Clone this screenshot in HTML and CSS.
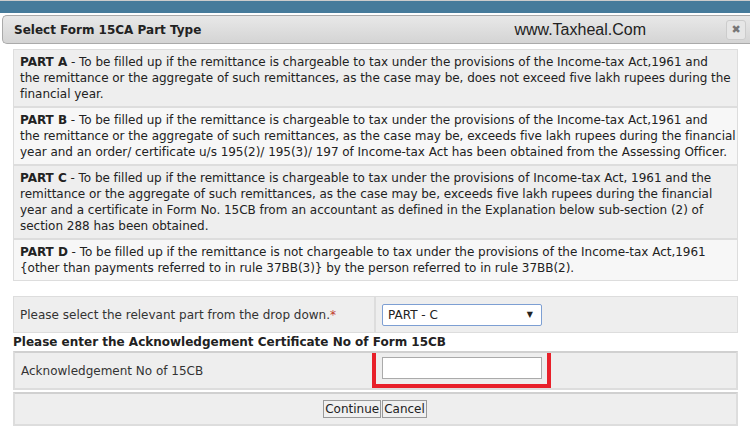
FILE: index.html
```html
<!DOCTYPE html>
<html lang="en">
<head>
    <meta charset="UTF-8">
    <title>Select Form 15CA Part Type</title>
    <link rel="stylesheet" href="styles.css">
</head>
<body>
    <div class="topbar"></div>
    <div class="dialog-head">
        <span class="dialog-title">Select Form 15CA Part Type</span>
        <span class="watermark">www.Taxheal.Com</span>
        <span class="close">&#10006;</span>
    </div>

    <div class="parts">
        <div class="part odd"><b>PART A</b> - To be filled up if the remittance is chargeable to tax under the provisions of the Income-tax Act,1961 and<br>the remittance or the aggregate of such remittances, as the case may be, does not exceed five lakh rupees during the<br>financial year.</div>
        <div class="part even"><b>PART B</b> - To be filled up if the remittance is chargeable to tax under the provisions of the Income-tax Act,1961 and<br>the remittance or the aggregate of such remittances, as the case may be, exceeds five lakh rupees during the financial<br>year and an order/ certificate u/s 195(2)/ 195(3)/ 197 of Income-tax Act has been obtained from the Assessing Officer.</div>
        <div class="part odd"><b>PART C</b> - To be filled up if the remittance is chargeable to tax under the provisions of Income-tax Act, 1961 and the<br>remittance or the aggregate of such remittances, as the case may be, exceeds five lakh rupees during the financial<br>year and a certificate in Form No. 15CB from an accountant as defined in the Explanation below sub-section (2) of<br>section 288 has been obtained.</div>
        <div class="part even"><b>PART D</b> - To be filled up if the remittance is not chargeable to tax under the provisions of the Income-tax Act,1961<br>{other than payments referred to in rule 37BB(3)} by the person referred to in rule 37BB(2).</div>
    </div>

    <div class="form-row">
        <div class="cell label">Please select the relevant part from the drop down.<span class="req">*</span></div>
        <div class="cell field">
            <div class="select">PART - C<span class="arrow">&#9660;</span></div>
        </div>
    </div>

    <h3 class="ack-head">Please enter the Acknowledgement Certificate No of Form 15CB</h3>

    <div class="form-row inset">
        <div class="cell label">Acknowledgement No of 15CB</div>
        <div class="cell field">
            <div class="highlight"><input type="text" class="ack-input"></div>
        </div>
    </div>

    <div class="form-row inset buttons">
        <button>Continue</button><button>Cancel</button>
    </div>
</body>
</html>
```

FILE: styles.css
```css
body { margin: 0; font-family: "DejaVu Sans", Verdana, sans-serif; font-size: 12px; color: #222; background: #fff; }
.topbar { height: 12px; background: #467b9b; border-top: 1px solid #ccc; }
.dialog-head { display: flex; align-items: center; height: 27px; margin: 2px 0 0 2px; padding: 0 4px 0 11px; border: 1px solid #aaa; border-right: none; border-radius: 5px 0 0 5px; background: linear-gradient(#e8e8e8, #d4d4d4); }
.dialog-title { font-weight: bold; font-size: 12px; color: #222; }
.watermark { margin-left: auto; margin-right: 80px; font-family: "Liberation Sans", Arial, sans-serif; font-size: 16px; color: #222; }
.close { width: 18px; height: 18px; line-height: 18px; text-align: center; font-size: 11px; color: #777; background: #e6e6e6; border: 1px solid #ccc; border-radius: 3px; }
.parts { margin: 5px 12px 0 13px; border: 1px solid #ddd; }
.part { padding: 4px 1px 4px 6px; line-height: 16px; letter-spacing: -0.03px; white-space: nowrap; border-bottom: 2px solid #ddd; }
.part:last-child { border-bottom: none; }
.part.odd { background: #eee; }
.part.even { background: #f7f7f7; }
.form-row { display: flex; margin: 15px 12px 0 13px; border: 1px solid #ddd; background: #eee; }
.cell { display: flex; align-items: center; }
.cell.label { width: 348px; padding: 0 6px; height: 35px; border-right: 2px solid #ddd; color: #333; }
.cell.field { padding-left: 6px; }
.req { color: #c0392b; }
.select { position: relative; width: 153px; height: 20px; line-height: 20px; padding-left: 5px; background: #fff; border: 1px solid #7d9fd3; border-radius: 2px; color: #222; }
.arrow { position: absolute; right: 8px; top: 0; font-size: 8px; }
.ack-head { margin: 2px 0 0 13px; font-size: 12px; font-weight: bold; }
.form-row.inset { margin-top: 2px; border: 2px solid #ddd; border-top-color: #d0d0d0; }
.form-row.inset .cell.label { height: 35px; border-right: none; width: 346px; }
.form-row.inset .cell.field { padding-left: 4px; }
.highlight { margin-left: -5px; padding: 4px 5px 5px 6px; border: 4px solid #e8202a; border-top-width: 0; }
.ack-input { width: 154px; height: 18px; border: 1px solid #aaa; padding: 1px 2px; }
.buttons { justify-content: center; align-items: center; height: 30px; margin-top: 1px; }
button { font-family: "DejaVu Sans", Verdana, sans-serif; font-size: 12px; padding: 1px 1px; margin: 0 1px 0 0; background: #f0f0f0; border: 1px solid #999; color: #222; }
```
